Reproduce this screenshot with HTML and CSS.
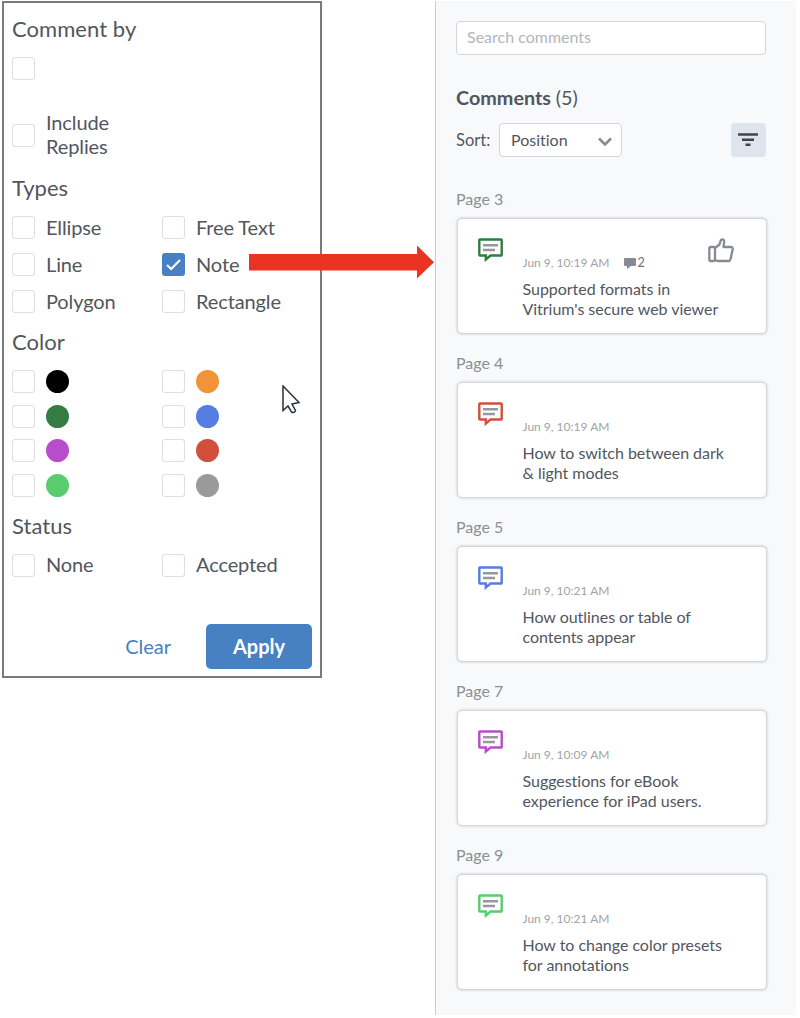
FILE: index.html
```html
<!DOCTYPE html>
<html lang="en">
<head>
  <meta charset="UTF-8" />
  <meta name="viewport" content="width=device-width, initial-scale=1.0" />
  <title>Comments filter</title>
  <link rel="stylesheet" href="styles.css">
</head>
<body>
  <!-- Icons used more than once -->
  <svg class="hidden">
    <symbol id="note" viewBox="0 0 25 24">
      <path d="M2 1.5h21a.7.7 0 0 1 .7.7v14.6a.7.7 0 0 1-.7.7H12.5L7.8 21.5v-4H2a.7.7 0 0 1-.7-.7V2.2a.7.7 0 0 1 .7-.7z" fill="#fff" stroke="currentColor" stroke-width="2.4"/>
      <path d="M5 7.2h15M5 12h12" stroke="#96989f" stroke-width="2.4"/>
    </symbol>
  </svg>

  <!-- Filter popup -->
  <div class="filter">
    <h2>Comment by</h2>
    <div class="check"><span class="box"></span></div>
    <div class="check replies"><span class="box"></span><span>Include<br>Replies</span></div>

    <h2>Types</h2>
    <div class="options">
      <div class="check"><span class="box"></span>Ellipse</div>
      <div class="check"><span class="box"></span>Free Text</div>
      <div class="check"><span class="box"></span>Line</div>
      <div class="check"><span class="box checked"><svg width="23" height="23" viewBox="0 0 23 23"><path d="M5 12l4.2 4L18 7" fill="none" stroke="#fff" stroke-width="2"/></svg></span>Note</div>
      <div class="check"><span class="box"></span>Polygon</div>
      <div class="check"><span class="box"></span>Rectangle</div>
    </div>

    <h2>Color</h2>
    <div class="options colors">
      <div class="check"><span class="box"></span><span class="dot black"></span></div>
      <div class="check"><span class="box"></span><span class="dot orange"></span></div>
      <div class="check"><span class="box"></span><span class="dot green"></span></div>
      <div class="check"><span class="box"></span><span class="dot blue"></span></div>
      <div class="check"><span class="box"></span><span class="dot purple"></span></div>
      <div class="check"><span class="box"></span><span class="dot red"></span></div>
      <div class="check"><span class="box"></span><span class="dot lime"></span></div>
      <div class="check"><span class="box"></span><span class="dot gray"></span></div>
    </div>

    <h2>Status</h2>
    <div class="options">
      <div class="check"><span class="box"></span>None</div>
      <div class="check"><span class="box"></span>Accepted</div>
    </div>

    <div class="actions">
      <button class="clear">Clear</button>
      <button class="apply">Apply</button>
    </div>
  </div>

  <!-- Comments panel -->
  <div class="comments">
    <input class="search" type="text" placeholder="Search comments">
    <h1>Comments <span>(5)</span></h1>
    <div class="sort">
      <span class="sort-label">Sort:</span>
      <div class="select">Position
        <svg width="14" height="10" viewBox="0 0 14 10"><path d="M1 1.5l6 6 6-6" fill="none" stroke="#868a92" stroke-width="2.6"/></svg>
      </div>
      <div class="filter-button">
        <svg width="20" height="14" viewBox="0 0 20 14"><path d="M0 1.5h20M4 6.7h12M7.5 11.7h5" stroke="#42454c" stroke-width="2.4"/></svg>
      </div>
    </div>

    <div class="page">Page 3</div>
    <div class="card">
      <svg class="note green-note"><use href="#note"/></svg>
      <div class="body">
        <div class="date">Jun 9, 10:19 AM
          <svg class="bubble" width="12" height="11" viewBox="0 0 12 11"><path d="M1 0h10a1 1 0 0 1 1 1v6a1 1 0 0 1-1 1H7l-4 3V8H1a1 1 0 0 1-1-1V1a1 1 0 0 1 1-1z" fill="#868a92"/></svg><span class="count">2</span>
        </div>
        <div class="text">Supported formats in<br>Vitrium's secure web viewer</div>
      </div>
      <svg class="like" width="26" height="25" viewBox="0 0 26 25"><path d="M2.5 9H6a1 1 0 0 1 1 1v12a1 1 0 0 1-1 1H2.5a1.2 1.2 0 0 1-1.2-1.2V10.2A1.2 1.2 0 0 1 2.5 9zM7 10l4.5-3.5L12.7 2.5c.6-1.7 3.6-1.3 3.5.8L15.5 9H23c1.2 0 2 .9 1.7 2.2l-2.2 10c-.3 1.2-1 1.8-2.2 1.8H9.5L7 22" fill="none" stroke="#868a92" stroke-width="2.3" stroke-linejoin="round"/></svg>
    </div>

    <div class="page">Page 4</div>
    <div class="card">
      <svg class="note red-note"><use href="#note"/></svg>
      <div class="body">
        <div class="date">Jun 9, 10:19 AM</div>
        <div class="text">How to switch between dark<br>&amp; light modes</div>
      </div>
    </div>

    <div class="page">Page 5</div>
    <div class="card">
      <svg class="note blue-note"><use href="#note"/></svg>
      <div class="body">
        <div class="date">Jun 9, 10:21 AM</div>
        <div class="text">How outlines or table of<br>contents appear</div>
      </div>
    </div>

    <div class="page">Page 7</div>
    <div class="card">
      <svg class="note purple-note"><use href="#note"/></svg>
      <div class="body">
        <div class="date">Jun 9, 10:09 AM</div>
        <div class="text">Suggestions for eBook<br>experience for iPad users.</div>
      </div>
    </div>

    <div class="page">Page 9</div>
    <div class="card">
      <svg class="note lime-note"><use href="#note"/></svg>
      <div class="body">
        <div class="date">Jun 9, 10:21 AM</div>
        <div class="text">How to change color presets<br>for annotations</div>
      </div>
    </div>
  </div>

  <!-- Arrow and mouse pointer over the page -->
  <svg class="arrow" width="186" height="34" viewBox="0 0 186 34"><path d="M0 9h168V.5l17 16.7-17 16.3v-8H0z" fill="#ea3323"/></svg>
  <svg class="cursor" width="20" height="30" viewBox="0 0 20 30"><path d="M1 1v24.5l5-4.5 3.5 6q3 1.5 4-1.5L10 19l7-1.500z" fill="#fff" stroke="#2c2f3c" stroke-width="1.5"/></svg>
</body>
</html>
```
FILE: styles.css
```css
* {
  box-sizing: border-box;
}

body {
  margin: 0;
  height: 1018px;
  position: relative;
  display: flex;
  align-items: flex-start;
  justify-content: space-between;
  padding: 1px 4px 0 2px;
  overflow: hidden;
  font-family: Lato, sans-serif;
  font-variant-ligatures: none;
  color: #52565e;
  background-color: #fff;
}

button {
  font-family: inherit;
  font-size: 20px;
  border: 0;
}

.hidden {
  display: none;
}

/* Filter popup */
.filter {
  width: 320px;
  height: 677px;
  padding: 14px 8px 7px;
  border: 2px solid #7a7c7b;
  display: flex;
  flex-direction: column;
}

.filter h2 {
  margin: 17px 0 16px;
  font-size: 22px;
  font-weight: 400;
  line-height: 24px;
  letter-spacing: 0.05px;
}

.filter h2:first-child {
  margin: 0 0 16px;
}

.check {
  display: flex;
  align-items: center;
  gap: 11.5px;
  height: 23px;
  font-size: 20px;
  line-height: 23.5px;
  letter-spacing: -0.12px;
}

.replies {
  height: 47px;
  margin-top: 32px;
}

.replies span:last-child {
  margin-top: -2px;
}

.box {
  width: 22.5px;
  height: 23px;
  border: 1.5px solid #dcdee3;
  border-radius: 3px;
}

.checked {
  border: 0;
  background-color: #4780c3;
}

.checked svg {
  display: block;
}

.options {
  display: grid;
  grid-template-columns: 150px 1fr;
  row-gap: 14px;
}

.colors {
  row-gap: 11.5px;
}

.dot {
  width: 23px;
  height: 23px;
  border-radius: 50%;
}

.black { background-color: #000; }
.orange { background-color: #f19437; }
.green { background-color: #347c43; }
.blue { background-color: #557de2; }
.purple { background-color: #b84dcb; }
.red { background-color: #d34f3d; }
.lime { background-color: #59cc6f; }
.gray { background-color: #9a9a9a; }

.actions {
  display: flex;
  justify-content: flex-end;
  gap: 35px;
  margin-top: auto;
}

.clear {
  padding: 0 0 1px;
  color: #4780c3;
  background: none;
}

.apply {
  width: 106px;
  height: 45px;
  padding-bottom: 2px;
  border-radius: 5px;
  font-weight: 700;
  color: #fff;
  background-color: #4780c3;
}

/* Comments panel */
.comments {
  width: 361px;
  height: 1014px;
  padding: 20px 30px 0 20px;
  border-left: 1px solid #c9ccd3;
  background-color: #f8f9fb;
}

.search {
  display: block;
  width: 310px;
  height: 34px;
  padding: 0 10px 3px;
  border: 1px solid #d3d6db;
  border-radius: 4px;
  font-family: inherit;
  font-size: 16px;
}

.search::placeholder {
  color: #b1b6bd;
}

.comments h1 {
  margin: 31px 0 14px;
  font-size: 19.8px;
  line-height: 23px;
}

.comments h1 span {
  font-weight: 400;
}

.sort {
  display: flex;
  align-items: center;
  width: 309.5px;
  height: 34px;
  font-size: 16.5px;
}

.sort-label {
  width: 43px;
}

.select {
  display: flex;
  align-items: center;
  justify-content: space-between;
  width: 123px;
  height: 34px;
  padding: 0 9px 2px 11px;
  border: 1px solid #d3d6db;
  border-radius: 4px;
  font-size: 16px;
  background-color: #fff;
}

.select svg {
  margin-top: 5px;
}

.filter-button {
  display: flex;
  align-items: center;
  justify-content: center;
  width: 34.5px;
  height: 34px;
  margin-left: auto;
  border-radius: 4px;
  background-color: #dfe5ee;
}

.page {
  margin: 32px 0 9px;
  font-size: 16px;
  line-height: 20px;
  color: #8b8f96;
}

.card + .page {
  margin-top: 19px;
}

.card {
  position: relative;
  display: flex;
  width: 310px;
  height: 116px;
  margin-left: 1px;
  padding: 19px 20px;
  border: 1px solid #d5d6dc;
  border-radius: 5px;
  background-color: #fff;
  box-shadow: 0 0 2px 1px #dfe0e5;
}

.note {
  width: 25px;
  height: 24px;
}

.green-note { color: #2f7d41; }
.red-note { color: #d34f3d; }
.blue-note { color: #557de2; }
.purple-note { color: #b84dcb; }
.lime-note { color: #59cc6f; }

.body {
  margin: 16px 0 0 19.5px;
  white-space: nowrap;
}

.date {
  display: flex;
  align-items: center;
  font-size: 12px;
  line-height: 18px;
  color: #a0a3a9;
}

.bubble {
  margin-left: 15px;
}

.count {
  margin-left: 1px;
  font-size: 12.5px;
  color: #6d7179;
}

.text {
  margin-top: 7px;
  font-size: 16px;
  line-height: 20px;
  letter-spacing: -0.03px;
}

.like {
  position: absolute;
  top: 19px;
  right: 32px;
}

/* Overlays */
.arrow {
  position: absolute;
  left: 249px;
  top: 245px;
}

.cursor {
  position: absolute;
  left: 282px;
  top: 385px;
}
```
